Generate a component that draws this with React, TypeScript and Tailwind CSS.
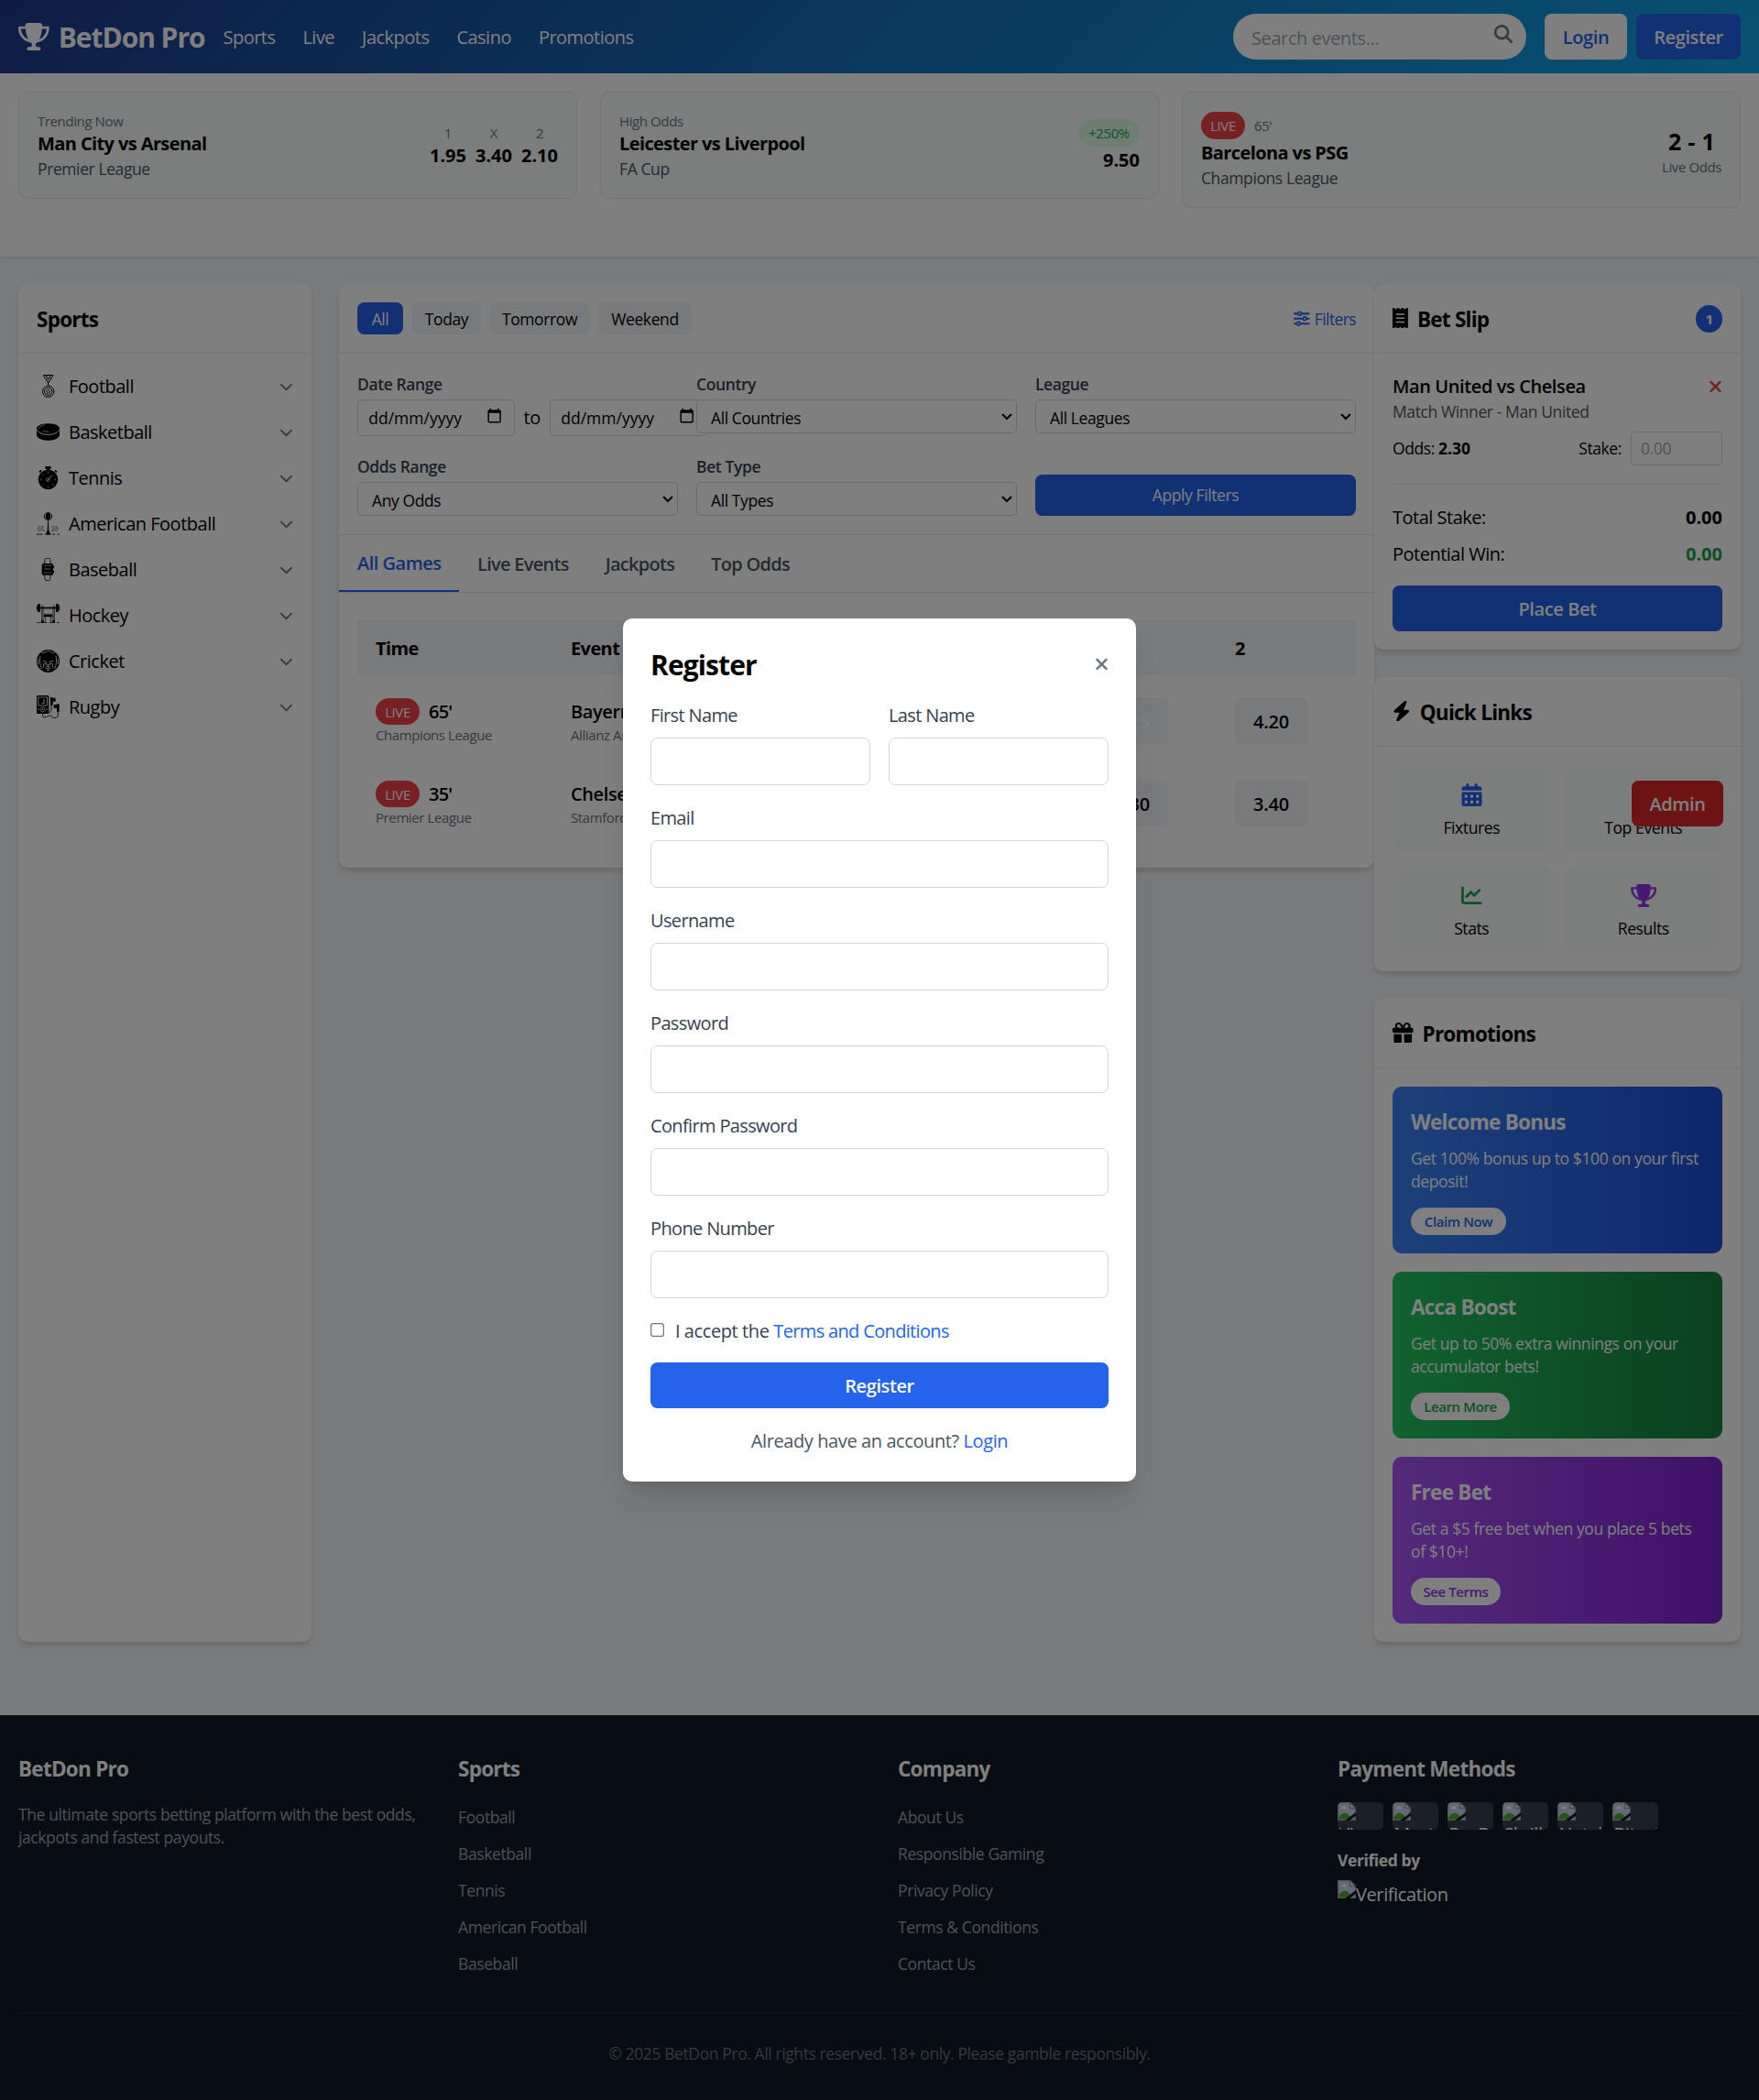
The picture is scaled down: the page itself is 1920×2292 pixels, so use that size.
import React from 'react';
import {
  FaBolt,
  FaCalendarDays,
  FaChartLine,
  FaChevronDown,
  FaGift,
  FaMagnifyingGlass,
  FaReceipt,
  FaSliders,
  FaStar,
  FaTrophy,
  FaXmark,
} from 'react-icons/fa6';

const CARD = 'rounded-lg bg-white shadow-[0_4px_6px_-1px_rgba(0,0,0,0.1),0_2px_4px_-1px_rgba(0,0,0,0.06)]';
const HEADING = 'text-lg font-bold tracking-[-0.033em]';
const STRONG = 'font-bold tracking-[-0.03em]';
const NUM = 'font-bold tracking-[0]';

/* ---------- sidebar drawings ---------- */

function Glyph({ children }: { children: React.ReactNode }) {
  return (
    <svg viewBox="0 0 75 75" className="mr-2 size-5 shrink-0" fill="#000" stroke="none">
      {children}
    </svg>
  );
}

const MedalGlyph = () => (
  <Glyph>
    <g fill="none" stroke="#000" strokeWidth="3">
      <path d="M22 1.5H54L38 27ZM30 2L38 16L46 2M38 27V35" />
      <circle cx="38" cy="55" r="18.5" />
      <circle cx="38" cy="55" r="12.5" />
      <path d="M38 48L40 53L45 54L41 57L42.500 62L38 59.500L33.500 62L35 57L31 54L36 53Z" strokeWidth="2" />
    </g>
  </Glyph>
);

const PuckGlyph = () => (
  <Glyph>
    <path d="M0 26C0 16 17 9.500 37.500 9.500S75 16 75 26V46C75 58 58 65.500 37.500 65.500S0 58 0 46Z" />
    <path d="M1 30C6 41 21 46 37.500 46S69 41 74 30" fill="none" stroke="#fff" strokeWidth="3" />
    <path d="M7 27C8 20 18 15.500 26 14.500M20 33C27 36 33 37 40 37" fill="none" stroke="#fff" strokeWidth="2" />
  </Glyph>
);

const StopwatchGlyph = () => (
  <Glyph>
    <rect x="28" y="0" width="19" height="9" rx="2" />
    <rect x="33" y="8" width="9" height="6" />
    <circle cx="37.500" cy="43" r="32" />
    <path d="M9 19L15 13M66 19L60 13" stroke="#000" strokeWidth="6" />
    <path d="M34 47L51 29" stroke="#fff" strokeWidth="3" />
    <circle cx="37" cy="43.500" r="5.500" fill="none" stroke="#fff" strokeWidth="2" />
    <path
      d="M37.500 17V21M37.500 65V69M12 43H16M59 43H63M20 25L23 28M20 61L23 58M55 61L52 58"
      stroke="#fff"
      strokeWidth="2.500"
    />
  </Glyph>
);

const SpeedBagGlyph = () => (
  <Glyph>
    <ellipse cx="37.500" cy="14" rx="13.500" ry="13.500" />
    <path d="M30 3C27 10 28 20 33 26M45 3C48 10 47 20 42 26" stroke="#fff" strokeWidth="2.500" fill="none" />
    <path d="M36.500 26H38.500L40 60L44 69V73H31V69L35 60Z" />
    <path d="M0 72.500H20M27 72.500H48M52 72.500H60M68 72.500H75" stroke="#000" strokeWidth="2.500" />
    <g stroke="#000" strokeWidth="2" fill="none" opacity="0.8">
      <path d="M4 48H26M1 54H24M5 60H27M49 48H71M51 54H74M48 60H70" strokeDasharray="9 2" />
    </g>
  </Glyph>
);

const WatchGlyph = () => (
  <Glyph>
    <path
      d="M26 18L27 5C27 2 29 1 31 1H40C43 1 44 3 44 5L46 18M26 55L27 69C27 72 29 73.500 31 73.500H40C43 73.500 44 72 44 69L46 55"
      fill="none"
      stroke="#000"
      strokeWidth="2.500"
    />
    <rect x="17" y="18" width="37" height="38" rx="5" />
    <rect x="53" y="25" width="4" height="8" />
    <rect x="53" y="41" width="4" height="8" />
    <path d="M22 25H49M22 48H49M24 38L29 34L33 39L37 33L41 38L46 35" stroke="#fff" strokeWidth="1.800" fill="none" />
  </Glyph>
);

const BenchGlyph = () => (
  <Glyph>
    <rect x="0" y="11" width="75" height="5" />
    <rect x="4" y="0" width="8" height="27" rx="1" />
    <rect x="0" y="5" width="5" height="17" />
    <rect x="63" y="0" width="8" height="27" rx="1" />
    <rect x="70" y="5" width="5" height="17" />
    <path d="M17 5V57M21 5V57M54 5V57M58 5V57M24 34H51M28 40V60M47 40V60" stroke="#000" strokeWidth="2" fill="none" />
    <rect x="23" y="36" width="29" height="7" rx="2" />
    <rect x="15" y="55" width="9" height="6" />
    <rect x="51" y="55" width="9" height="6" />
    <path d="M0 61.500H35M40 61.500H60M66 61.500H75" stroke="#000" strokeWidth="2" />
  </Glyph>
);

const HelmetGlyph = () => (
  <Glyph>
    <circle cx="37.500" cy="37.500" r="37.500" />
    <g fill="none" stroke="#fff" strokeWidth="2.500">
      <path d="M15 8C24 14 29 6 37.500 4C46 6 51 14 60 8" />
      <path d="M12 20C9 34 10 50 16 64M63 20C66 34 65 50 59 64" />
      <path d="M20 37L32 40V46H24L21 60M55 37L43 40V46H51L54 60" />
      <path d="M30 50H45M29 56H46M28 62H47M32 68H43M37.500 47V70" strokeWidth="2" />
      <path d="M5 30V48M70 30V48" />
    </g>
  </Glyph>
);

const PlayerGlyph = () => (
  <Glyph>
    <rect x="0" y="0" width="40" height="60" rx="3" />
    <rect x="5.500" y="6" width="29" height="27" fill="none" stroke="#fff" strokeWidth="2.500" />
    <path d="M24 12V26H17" fill="none" stroke="#fff" strokeWidth="3" />
    <circle cx="20" cy="46" r="7.500" fill="none" stroke="#fff" strokeWidth="2.200" />
    <circle cx="20" cy="46" r="2.500" fill="#fff" />
    <path d="M4 46H9M31 46H36" stroke="#fff" strokeWidth="2.500" />
    <rect x="45" y="6" width="8" height="27" rx="2" />
    <rect x="52" y="8" width="10" height="12" rx="3" />
    <rect x="66" y="28" width="8" height="26" rx="2" />
    <rect x="56" y="30" width="11" height="12" rx="3" />
    <path
      d="M20 60V66C20 72 25 73 32 70C40 66 49 64 50 70C52 75 70 75 70 66V54M48 33V50L40 58"
      fill="none"
      stroke="#000"
      strokeWidth="2.500"
    />
  </Glyph>
);

const SPORTS: [string, () => React.JSX.Element][] = [
  ['Football', MedalGlyph],
  ['Basketball', PuckGlyph],
  ['Tennis', StopwatchGlyph],
  ['American Football', SpeedBagGlyph],
  ['Baseball', WatchGlyph],
  ['Hockey', BenchGlyph],
  ['Cricket', HelmetGlyph],
  ['Rugby', PlayerGlyph],
];

/* ---------- small parts ---------- */

function LivePill() {
  return (
    <span className="w-[38.400px] rounded-full bg-[#ef4444] py-1 text-center text-xs text-white">LIVE</span>
  );
}

function Header() {
  return (
    <header className="bg-[linear-gradient(135deg,#1e3a8a,#0ea5e9)] text-white">
      <div className="flex h-16 items-center justify-between px-4">
        <div className="flex items-center">
          <div className="mr-4 flex items-center text-2xl font-bold tracking-[-0.035em]">
            <FaTrophy className="mr-2 h-6 w-[27px]" />
            <span className="pt-[1.600px]">BetDon Pro</span>
          </div>
          <nav className="flex gap-6 pt-[1.600px] tracking-[-0.026em]">
            {['Sports', 'Live', 'Jackpots', 'Casino', 'Promotions'].map((n) => (
              <a key={n}>{n}</a>
            ))}
          </nav>
        </div>
        <div className="flex items-center">
          <div className="relative mr-4">
            <input
              type="text"
              placeholder="Search events..."
              className="block h-10 w-64 rounded-full bg-white px-4 pt-[1.600px] placeholder:text-[#9ca3af]"
            />
            <FaMagnifyingGlass className="absolute top-[9.600px] right-3 text-[#6b7280]" />
          </div>
          <button className="mr-2 h-10 w-[72px] rounded-md bg-white pt-[1.600px] font-semibold text-[#2563eb]">
            Login
          </button>
          <button className="h-10 w-[91.200px] rounded-md bg-[#2563eb] pt-[1.600px] font-semibold">Register</button>
        </div>
      </div>
    </header>
  );
}

const SLIDE = 'flex items-center justify-between rounded-lg border border-[#e5e7eb] bg-[#f9fafb] px-4 pt-[17px] pb-[15px]';

function Highlights() {
  return (
    <section className="h-40 bg-white px-4 pt-4 shadow-sm">
      <div className="grid grid-cols-3 items-start gap-5">
        <div className={SLIDE}>
          <div>
            <div className="text-xs text-[#6b7280]">Trending Now</div>
            <div className={STRONG}>Man City vs Arsenal</div>
            <div className="text-sm text-[#4b5563]">Premier League</div>
          </div>
          <div className="flex gap-2 text-center">
            {[['1', '1.95'], ['X', '3.40'], ['2', '2.10']].map(([k, v]) => (
              <div key={k}>
                <div className="text-xs text-[#6b7280]">{k}</div>
                <div className={NUM}>{v}</div>
              </div>
            ))}
          </div>
        </div>
        <div className={SLIDE}>
          <div>
            <div className="text-xs text-[#6b7280]">High Odds</div>
            <div className={STRONG}>Leicester vs Liverpool</div>
            <div className="text-sm text-[#4b5563]">FA Cup</div>
          </div>
          <div className="flex flex-col items-end">
            <div className="w-[53.600px] rounded-full bg-[#dcfce7] py-1 text-center text-xs text-[#16a34a]">+250%</div>
            <div className={NUM}>9.50</div>
          </div>
        </div>
        <div className={SLIDE}>
          <div>
            <div className="flex items-center gap-2">
              <LivePill />
              <span className="text-xs text-[#6b7280]">65'</span>
            </div>
            <div className={STRONG}>Barcelona vs PSG</div>
            <div className="text-sm text-[#4b5563]">Champions League</div>
          </div>
          <div className="text-center">
            <div className="text-xl font-bold tracking-[0.01em]">2 - 1</div>
            <div className="text-xs text-[#6b7280]">Live Odds</div>
          </div>
        </div>
      </div>
    </section>
  );
}

function Sidebar() {
  return (
    <aside className={`w-64 shrink-0 ${CARD}`}>
      <div className="border-b border-[#e5e7eb] px-4 pt-[17px] pb-[15px]">
        <h2 className={HEADING}>Sports</h2>
      </div>
      <ul className="p-2">
        {SPORTS.map(([name, Icon]) => (
          <li key={name} className="flex h-10 items-center justify-between px-2">
            <span className="flex items-center">
              <Icon />
              <span className="pt-[1.600px] tracking-[-0.025em]">{name}</span>
            </span>
            <FaChevronDown className="text-xs text-[#6b7280]" />
          </li>
        ))}
      </ul>
    </aside>
  );
}

function DateField() {
  return (
    <div className="flex h-[31.600px] w-[137.200px] shrink-0 items-center justify-between rounded border border-[#d1d5db] bg-white pr-[9.600px] pl-[9px] text-sm">
      <span className="pt-[1.600px] tracking-[0]">dd/mm/yyyy</span>
      <svg viewBox="0 0 24 24" className="mb-[3px] size-[13.800px]" fill="#000">
        <path d="M20 3h-1V1h-2v2H7V1H5v2H4c-1.100 0-2 .9-2 2v16c0 1.100.9 2 2 2h16c1.100 0 2-.9 2-2V5c0-1.100-.9-2-2-2zm0 18H4V8h16v13z" />
      </svg>
    </div>
  );
}

const FILTER_LABEL = 'mb-[3px] block pt-px text-sm font-semibold text-[#374151]';

function SelectField({ label, value }: { label: string; value: string }) {
  return (
    <div>
      <label className={FILTER_LABEL}>{label}</label>
      <select className="relative block h-[29.600px] w-full rounded border border-[#d1d5db] bg-white px-2 pt-[5px] pb-[3px] text-sm">
        <option>{value}</option>
      </select>
    </div>
  );
}

const GAMES = [
  { t: "65'", league: 'Champions League', ev: 'Bayern vs Dortmund', at: 'Allianz Arena', odds: ['1.85', '3.75', '4.20'] },
  { t: "35'", league: 'Premier League', ev: 'Chelsea vs Tottenham', at: 'Stamford Bridge', odds: ['2.10', '3.30', '3.40'] },
];

function Games() {
  return (
    <section className={`ml-6 w-[904px] self-start ${CARD}`}>
      <div className="flex items-center justify-between border-b border-[#e5e7eb] p-4 text-sm">
        <div className="flex gap-2">
          <button className="h-7 w-10 rounded-md bg-[#2563eb] pt-px text-white">All</button>
          <button className="h-7 w-[60px] rounded-md bg-[#f3f4f6] pt-px">Today</button>
          <button className="h-7 w-[86.400px] rounded-md bg-[#f3f4f6] pt-px">Tomorrow</button>
          <button className="h-7 w-[81.600px] rounded-md bg-[#f3f4f6] pt-px">Weekend</button>
        </div>
        <button className="flex items-center gap-1 text-[#2563eb]">
          <FaSliders />
          <span className="pt-px tracking-[-0.035em]">Filters</span>
        </button>
      </div>

      <div className="grid grid-cols-3 gap-4 border-b border-[#e5e7eb] p-4">
        <div>
          <label className={FILTER_LABEL}>Date Range</label>
          <div className="flex items-center">
            <DateField />
            <span className="w-[30.800px] shrink-0 pt-px text-center">to</span>
            <DateField />
          </div>
        </div>
        <SelectField label="Country" value="All Countries" />
        <SelectField label="League" value="All Leagues" />
        <SelectField label="Odds Range" value="Any Odds" />
        <SelectField label="Bet Type" value="All Types" />
        <div className="flex items-end">
          <button className="h-9 w-full rounded-md bg-[#2563eb] pt-px text-sm text-white">Apply Filters</button>
        </div>
      </div>

      <div className="flex border-b border-[#e5e7eb] font-semibold tracking-[-0.036em]">
        <button className="w-[104.800px] border-b-2 border-[#2563eb] pt-[13px] pr-4 pb-[11px] pl-4 text-left tracking-[-0.025em] whitespace-nowrap text-[#2563eb]">
          All Games
        </button>
        {['Live Events', 'Jackpots', 'Top Odds'].map((t) => (
          <button key={t} className="px-4 pt-[13px] pb-[11px] text-[#4b5563]">
            {t}
          </button>
        ))}
      </div>

      <div className="p-4">
        <table className="w-full table-fixed border-separate border-spacing-x-0 border-spacing-y-2 text-left">
          <thead>
            <tr className="bg-[#f3f4f6]">
              <th className="w-[170.400px] px-4 pt-[13px] pb-[11px] font-bold tracking-[-0.03em]">Time</th>
              <th className="px-4 pt-[13px] pb-[11px] font-bold tracking-[-0.03em]">Event</th>
              <th className="w-[121.600px] px-4 pt-[13px] pb-[11px] font-bold">1</th>
              <th className="w-[121.600px] px-4 pt-[13px] pb-[11px] font-bold">X</th>
              <th className="w-[121.600px] px-4 pt-[13px] pb-[11px] font-bold">2</th>
            </tr>
          </thead>
          <tbody>
            {GAMES.map((g) => (
              <tr key={g.t}>
                <td className="px-4 py-3">
                  <div className="flex items-center gap-2">
                    <LivePill />
                    <span className="font-semibold tracking-[-0.04em]">{g.t}</span>
                  </div>
                  <div className="text-xs text-[#6b7280]">{g.league}</div>
                </td>
                <td className="px-4 py-3">
                  <div className="font-semibold">{g.ev}</div>
                  <div className="text-xs text-[#6b7280]">{g.at}</div>
                </td>
                {g.odds.map((o) => (
                  <td key={o} className="px-4 py-3">
                    <button
                      className={`block h-10 w-[63.200px] rounded bg-[#f3f4f6] pt-[1.600px] font-semibold tracking-[-0.01em] ${o === '3.75' ? 'text-white' : ''}`}
                    >
                      {o}
                    </button>
                  </td>
                ))}
              </tr>
            ))}
          </tbody>
        </table>
      </div>
    </section>
  );
}

function PanelTitle({ icon, children }: { icon: React.ReactNode; children: React.ReactNode }) {
  return (
    <div className="flex h-[60px] items-center gap-2 text-lg">
      {icon}
      <h2 className="pt-px text-lg font-bold tracking-[-0.033em]">{children}</h2>
    </div>
  );
}

function BetSlip() {
  return (
    <div className={CARD}>
      <div className="flex items-center justify-between border-b border-[#e5e7eb] px-4">
        <PanelTitle icon={<FaReceipt className="mb-px w-[13.500px]" />}>Bet Slip</PanelTitle>
        <span className="flex h-6 w-[23.200px] items-center justify-center rounded-full bg-[#2563eb] text-xs font-bold text-white">
          1
        </span>
      </div>
      <div className="p-4">
        <div className="border-b border-[#e5e7eb] pb-4">
          <div className="flex items-center justify-between">
            <span className="pt-px font-semibold">Man United vs Chelsea</span>
            <FaXmark className="w-3 text-[17.500px] text-[#ef4444]" />
          </div>
          <div className="text-sm text-[#4b5563]">Match Winner - Man United</div>
          <div className="mt-[7px] flex items-center justify-between text-sm">
            <span>
              Odds: <b className="tracking-[0]">2.30</b>
            </span>
            <span className="flex items-center gap-2">
              Stake:
              <input
                placeholder="0.00"
                className="w-20 rounded border border-[#d1d5db] bg-white px-2 py-1 placeholder:text-[#9ca3af]"
              />
            </span>
          </div>
        </div>
        <div className="mt-[17px] mb-2 flex justify-between tracking-[-0.025em]">
          <span>Total Stake:</span>
          <b className="tracking-[0]">0.00</b>
        </div>
        <div className="mb-[15px] flex justify-between tracking-[-0.025em]">
          <span>Potential Win:</span>
          <b className="tracking-[0] text-[#16a34a]">0.00</b>
        </div>
        <button className="h-10 w-full rounded-md bg-[#2563eb] pt-[1.600px] font-semibold text-white">Place Bet</button>
      </div>
    </div>
  );
}

function QuickLinks() {
  const links: [string, React.ReactNode][] = [
    ['Fixtures', <FaCalendarDays className="text-[#2563eb]" />],
    ['Top Events', <FaStar className="text-[#eab308]" />],
    ['Stats', <FaChartLine className="text-[18px] text-[#16a34a]" />],
    ['Results', <FaTrophy className="w-[22.500px] text-[#9333ea]" />],
  ];
  return (
    <div className={`mt-6 ${CARD}`}>
      <div className="border-b border-[#e5e7eb] px-4">
        <PanelTitle icon={<FaBolt className="mb-px w-[15.750px]" />}>Quick Links</PanelTitle>
      </div>
      <div className="grid grid-cols-2 gap-3 p-4">
        {links.map(([name, icon]) => (
          <div key={name} className="flex flex-col items-center rounded-lg bg-[#f9fafb] px-3 pt-3 pb-[11px]">
            <div className="mb-[5px] flex h-7 items-center text-xl">{icon}</div>
            <div className="text-sm">{name}</div>
          </div>
        ))}
      </div>
    </div>
  );
}

const PROMOS = [
  {
    title: 'Welcome Bonus',
    text: 'Get 100% bonus up to $100 on your first deposit!',
    cta: 'Claim Now',
    bg: 'bg-[linear-gradient(to_right,#3b82f6,#1d4ed8)]',
    fg: 'text-[#2563eb]',
    w: 'w-[83.200px]',
  },
  {
    title: 'Acca Boost',
    text: 'Get up to 50% extra winnings on your accumulator bets!',
    cta: 'Learn More',
    bg: 'bg-[linear-gradient(to_right,#22c55e,#15803d)]',
    fg: 'text-[#16a34a]',
    w: 'w-[86.400px]',
  },
  {
    title: 'Free Bet',
    text: 'Get a $5 free bet when you place 5 bets of $10+!',
    cta: 'See Terms',
    bg: 'bg-[linear-gradient(to_right,#a855f7,#7e22ce)]',
    fg: 'text-[#9333ea]',
    w: 'w-[78.400px]',
  },
];

function Promotions() {
  return (
    <div className={`mt-6 ${CARD}`}>
      <div className="border-b border-[#e5e7eb] px-4">
        <PanelTitle icon={<FaGift className="mb-px" />}>Promotions</PanelTitle>
      </div>
      <div className="flex flex-col gap-4 p-4">
        {PROMOS.map((p) => (
          <div key={p.title} className={`rounded-lg px-4 pt-[17px] pb-4 text-white ${p.bg}`}>
            <h3 className="mb-2 text-lg font-bold tracking-[-0.033em]">{p.title}</h3>
            <p className="mb-[12.600px] text-sm">{p.text}</p>
            <button className={`block h-6 rounded-full bg-white text-xs font-semibold ${p.fg} ${p.w}`}>{p.cta}</button>
          </div>
        ))}
      </div>
    </div>
  );
}

function BrokenImage() {
  return (
    <svg viewBox="0 0 16 16" className="block size-4 shrink-0">
      <path d="M0.500 0.500H11L15.500 5V15.500H0.500Z" fill="#c3d1ee" stroke="#a3a3a3" />
      <path d="M11 0.500V5H15.500Z" fill="#fff" stroke="#8a8a8a" />
      <path d="M3 5.500C3 4.300 4 4 4.600 4.200C5 3 7 3 7.200 4.300C8.200 4.300 8.200 5.700 7.500 5.700H3.300Z" fill="#fff" />
      <path d="M1 15V13C3 10 5.500 9.200 7 9.500C9 9.700 11 12 12 15Z" fill="#4fa92d" />
      <path d="M6.500 16L16 8.800V11.800L10.500 16Z" fill="#111827" />
    </svg>
  );
}

function Footer() {
  const cols: [string, string[]][] = [
    ['Sports', ['Football', 'Basketball', 'Tennis', 'American Football', 'Baseball']],
    ['Company', ['About Us', 'Responsible Gaming', 'Privacy Policy', 'Terms & Conditions', 'Contact Us']],
  ];
  return (
    <footer className="mt-10 bg-[#111827] px-4 pt-[32.800px] pb-[30.400px] text-white">
      <div className="grid grid-cols-4 gap-8">
        <div>
          <h3 className={`mb-4 ${HEADING}`}>BetDon Pro</h3>
          <p className="text-sm text-[#9ca3af]">
            The ultimate sports betting platform with the best odds, jackpots and fastest payouts.
          </p>
        </div>
        {cols.map(([title, items]) => (
          <div key={title}>
            <h3 className={`mb-4 ${HEADING}`}>{title}</h3>
            <ul>
              {items.map((i) => (
                <li key={i} className="mb-2">
                  <a className="text-sm text-[#9ca3af]">{i}</a>
                </li>
              ))}
            </ul>
          </div>
        ))}
        <div>
          <h3 className={`mb-[15.200px] ${HEADING}`}>Payment Methods</h3>
          <div className="flex gap-2">
            {['Visa', 'Mastercard', 'PayPal', 'Skrill', 'Neteller', 'Bitcoin'].map((m) => (
              <div key={m} className="h-6 w-10 overflow-hidden rounded bg-[#374151]">
                <BrokenImage />
                <div className="pl-px leading-6">{m}</div>
              </div>
            ))}
          </div>
          <h4 className="mt-[16.800px] mb-[7.200px] text-sm font-bold">Verified by</h4>
          <div className="flex items-start">
            <BrokenImage />
            <span className="pt-px">Verification</span>
          </div>
        </div>
      </div>
      <div className="mt-[23.200px] border-t border-[#1f2937] pt-[24.800px] text-center text-sm text-[#6b7280]">
        © 2025 BetDon Pro. All rights reserved. 18+ only. Please gamble responsibly.
      </div>
    </footer>
  );
}

function Field({ label }: { label: string }) {
  return (
    <div className="mb-4">
      <label className="mb-[7px] block pt-px tracking-[-0.032em] text-[#374151]">{label}</label>
      <input className="block w-full rounded-md border border-[#d1d5db] bg-white px-3 py-2" />
    </div>
  );
}

function RegisterModal() {
  return (
    <div className="absolute inset-0 flex items-center justify-center bg-black/50">
      <div className="w-[448px] rounded-lg bg-white p-6 shadow-xl">
        <div className="mb-4 flex h-8 items-center justify-between">
          <h2 className="pt-[1.600px] text-2xl font-bold tracking-[-0.03em]">Register</h2>
          <FaXmark className="w-3 text-[17.500px] text-[#6b7280]" />
        </div>
        <div className="grid grid-cols-2 gap-4">
          <Field label="First Name" />
          <Field label="Last Name" />
        </div>
        {['Email', 'Username', 'Password', 'Confirm Password', 'Phone Number'].map((l) => (
          <Field key={l} label={l} />
        ))}
        <label className="mb-4 flex h-6 items-center text-[#374151]">
          <input type="checkbox" className="mr-[8.500px]" />
          <span className="pt-[1.600px]">
            I accept the <a className="tracking-[-0.033em] text-[#2563eb]">Terms and Conditions</a>
          </span>
        </label>
        <button className="mb-4 h-10 w-full rounded-md bg-[#2563eb] pt-[1.600px] font-semibold text-white">
          Register
        </button>
        <p className="-mb-px pt-px text-center text-[#4b5563]">
          Already have an account? <a className="text-[#2563eb]">Login</a>
        </p>
      </div>
    </div>
  );
}

export default function App() {
  return (
    <div className="relative bg-[#f3f4f6] font-['Open_Sans','Noto_Sans',sans-serif] tracking-[-0.02em] text-black [font-stretch:95%] [zoom:1.25]">
      <Header />
      <Highlights />
      <main className="flex px-4 py-6">
        <Sidebar />
        <Games />
        <div className="w-80 shrink-0">
          <BetSlip />
          <QuickLinks />
          <Promotions />
        </div>
      </main>
      <Footer />
      <button className="absolute top-[681.600px] right-[31.200px] h-10 w-20 rounded-md bg-[#dc2626] pt-[1.600px] font-semibold text-white">
        Admin
      </button>
      <RegisterModal />
    </div>
  );
}
